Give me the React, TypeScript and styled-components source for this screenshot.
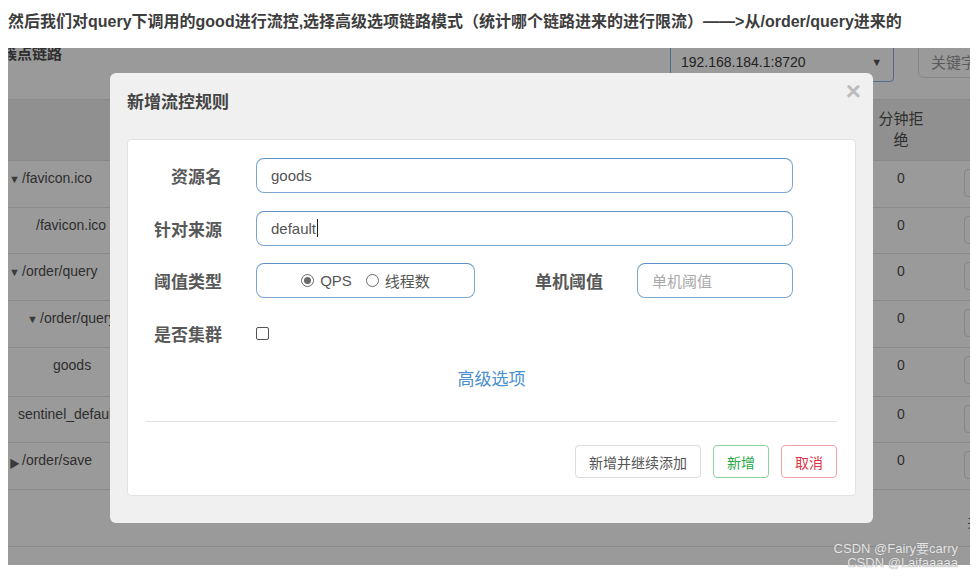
import styled, { createGlobalStyle } from 'styled-components';

const GlobalStyle = createGlobalStyle`
  html, body {
    margin: 0;
    padding: 0;
    background: #fff;
  }
  body {
    font-family: "Liberation Sans", "Noto Sans CJK SC", sans-serif;
  }
  * {
    box-sizing: border-box;
  }
`;

type Caret = 'down' | 'right' | null;

const rows: { name: string; indent: number; caret: Caret; height: number }[] = [
  { name: '/favicon.ico', indent: 14, caret: 'down', height: 47 },
  { name: '/favicon.ico', indent: 28, caret: null, height: 46 },
  { name: '/order/query', indent: 14, caret: 'down', height: 47 },
  { name: '/order/query', indent: 32, caret: 'down', height: 47 },
  { name: 'goods', indent: 45, caret: null, height: 49 },
  { name: 'sentinel_default_context', indent: 10, caret: null, height: 46 },
  { name: '/order/save', indent: 14, caret: 'right', height: 47 },
];

export default function App() {
  return (
    <Page>
      <GlobalStyle />
      <Caption>
        然后我们对query下调用的good进行流控,选择高级选项链路模式（统计哪个链路进来的进行限流）——&gt;从/order/query进来的
      </Caption>

      <Shot>
        <Toolbar>
          <PanelTitle>簇点链路</PanelTitle>
          <MachineSelect>
            <span>192.168.184.1:8720</span>
            <SelectArrow>▼</SelectArrow>
          </MachineSelect>
          <SearchBox>关键字</SearchBox>
        </Toolbar>

        <Table>
          <HeadRow>
            <Cell />
            <Cell />
            <HeadCell>分钟拒绝</HeadCell>
            <Cell />
          </HeadRow>
          {rows.map((r, i) => (
            <BodyRow key={i} $height={r.height}>
              <TreeCell $indent={r.indent}>
                {r.caret && <CaretMark $indent={r.indent}>{r.caret === 'down' ? '▼' : '▶'}</CaretMark>}
                {r.name}
              </TreeCell>
              <Cell />
              <NumCell>0</NumCell>
              <ActionCell>
                <GhostButton />
              </ActionCell>
            </BodyRow>
          ))}
          <Pager>共 7 条记录</Pager>
        </Table>

        <Modal>
          <CloseMark>×</CloseMark>
          <ModalTitle>新增流控规则</ModalTitle>
          <Card>
            <FormRow>
              <Label>资源名</Label>
              <Field $width={537}>goods</Field>
            </FormRow>
            <FormRow>
              <Label>针对来源</Label>
              <Field $width={537}>
                default<TextCaret />
              </Field>
            </FormRow>
            <FormRow>
              <Label>阈值类型</Label>
              <RadioGroup>
                <RadioItem>
                  <Radio $checked />
                  QPS
                </RadioItem>
                <RadioItem>
                  <Radio />
                  线程数
                </RadioItem>
              </RadioGroup>
              <SideLabel>单机阈值</SideLabel>
              <Field $width={156} $placeholder>单机阈值</Field>
            </FormRow>
            <FormRow>
              <Label>是否集群</Label>
              <CheckBox />
            </FormRow>
            <AdvancedLink>高级选项</AdvancedLink>
            <Divider />
            <Footer>
              <Button $tone="default">新增并继续添加</Button>
              <Button $tone="success">新增</Button>
              <Button $tone="danger">取消</Button>
            </Footer>
          </Card>
        </Modal>
      </Shot>

      <Watermark>
        <span>CSDN @Fairy要carry</span>
        <span>CSDN @Laifaaaaa</span>
      </Watermark>
    </Page>
  );
}

const Page = styled.div`
  position: relative;
  width: 978px;
  height: 578px;
  overflow: hidden;
`;

const Caption = styled.div`
  height: 48px;
  padding: 0 0 8px 8px;
  display: flex;
  align-items: center;

  font-size: 16px;
  font-weight: 700;
  color: #3d3d3d;
  white-space: nowrap;
`;

const Shot = styled.div`
  position: relative;
  width: 962px;
  height: 517px;
  margin-left: 8px;
  overflow: hidden;

  background: #9a9a9a;
  color: #2e2e2e;
`;

const Toolbar = styled.div`
  display: flex;
  height: 52px;
  border-bottom: 1px solid #8a8a8a;
`;

const PanelTitle = styled.div`
  flex: 0 0 60px;
  margin: -6px 0 0 -6px;
  white-space: nowrap;

  font-size: 15px;
  font-weight: 700;
  color: #2e2e2e;
`;

const MachineSelect = styled.div`
  display: flex;
  flex: 0 0 224px;
  align-items: center;
  justify-content: space-between;

  height: 42px;
  margin: -8px 0 0 608px;
  padding: 2px 11px 0 10px;

  border: 1px solid #4f6d8e;
  border-radius: 0 0 4px 4px;

  font-size: 14px;
  color: #222;
`;

const SelectArrow = styled.span`
  font-size: 11px;
  color: #333;
`;

const SearchBox = styled.div`
  flex: 0 0 70px;
  height: 38px;
  margin: -8px 0 0 24px;
  padding: 10px 0 0 12px;
  white-space: nowrap;

  border: 1px solid #868686;
  border-radius: 6px;

  font-size: 15px;
  color: #5a5a5a;
`;

const Table = styled.div`
  display: flex;
  flex-direction: column;
`;

const HeadRow = styled.div`
  display: grid;
  grid-template-columns: 150px 1fr 60px 39px;
  height: 61px;

  background: #909090;
  border-bottom: 1px solid #888;
`;

const BodyRow = styled.div<{ $height: number }>`
  display: grid;
  grid-template-columns: 150px 1fr 60px 39px;
  height: ${({ $height }) => $height}px;

  border-bottom: 1px solid #8a8a8a;
`;

const Cell = styled.div``;

const HeadCell = styled.div`
  padding: 8px 4px 0;
  font-size: 15px;
  line-height: 21px;
  text-align: center;
  color: #2e2e2e;
`;

const TreeCell = styled.div<{ $indent: number }>`
  position: relative;
  padding: 9px 0 0 ${({ $indent }) => $indent}px;
  white-space: nowrap;
  font-size: 14px;
`;

const CaretMark = styled.span<{ $indent: number }>`
  position: absolute;
  top: 12px;
  left: ${({ $indent }) => $indent - 13}px;
  font-size: 11px;
  color: #3a3a3a;
`;

const NumCell = styled.div`
  padding-top: 9px;
  font-size: 14px;
  text-align: center;
`;

const ActionCell = styled.div`
  padding: 8px 0 0 33px;
`;

const GhostButton = styled.div`
  width: 40px;
  height: 28px;
  border: 1px solid #858585;
  border-radius: 4px;
`;

const Pager = styled.div`
  display: flex;
  justify-content: flex-end;
  height: 57px;
  padding-top: 20px;
  margin-right: -74px;
  white-space: nowrap;

  border-bottom: 1px solid #8a8a8a;

  font-size: 15px;
  color: #333;
`;

const Modal = styled.div`
  position: absolute;
  top: 25px;
  left: 102px;
  width: 763px;
  height: 450px;
  padding: 18px 17px 0;

  background: #f0f0f0;
  border-radius: 6px;
`;

const CloseMark = styled.div`
  position: absolute;
  top: 3px;
  right: 12px;

  font-size: 26px;
  font-weight: 700;
  color: #bcbcbc;
`;

const ModalTitle = styled.div`
  height: 24px;
  margin-bottom: 24px;

  font-size: 17px;
  font-weight: 700;
  line-height: 24px;
  color: #444;
`;

const Card = styled.div`
  display: flex;
  flex-direction: column;
  padding: 18px 18px 17px;

  background: #fff;
  border: 1px solid #e2e2e2;
  border-radius: 4px;
`;

const FormRow = styled.div`
  display: flex;
  align-items: center;
  height: 35px;
  margin-bottom: 17.6px;
`;

const Label = styled.div`
  width: 76px;
  margin-right: 34px;

  text-align: right;
  font-size: 17px;
  font-weight: 700;
  color: #585858;
  white-space: nowrap;
`;

const SideLabel = styled(Label)`
  width: 128px;
`;

const Field = styled.div<{ $width: number; $placeholder?: boolean }>`
  display: flex;
  align-items: center;
  width: ${({ $width }) => $width}px;
  height: 35px;
  padding: 0 14px;

  border: 1px solid #7ba6d4;
  border-top-color: #5f91c6;
  border-radius: 8px;

  font-size: 15px;
  color: ${({ $placeholder }) => ($placeholder ? '#a9a9a9' : '#555')};
`;

const TextCaret = styled.span`
  display: inline-block;
  width: 1px;
  height: 18px;
  margin-left: 1px;
  background: #222;
`;

const RadioGroup = styled.div`
  display: flex;
  align-items: center;
  justify-content: center;
  gap: 14px;
  width: 219px;
  height: 35px;

  border: 1px solid #7ba6d4;
  border-top-color: #5f91c6;
  border-radius: 8px;
`;

const RadioItem = styled.div`
  display: flex;
  align-items: center;
  gap: 6px;
  font-size: 15px;
  color: #555;
`;

const Radio = styled.span<{ $checked?: boolean }>`
  position: relative;
  width: 13px;
  height: 13px;
  border: 1px solid #6a6a6a;
  border-radius: 50%;

  &::after {
    content: '';
    display: ${({ $checked }) => ($checked ? 'block' : 'none')};
    position: absolute;
    top: 2px;
    left: 2px;
    width: 7px;
    height: 7px;
    border-radius: 50%;
    background: #6a6a6a;
  }
`;

const CheckBox = styled.span`
  width: 13px;
  height: 13px;
  border: 1px solid #555;
  border-radius: 2px;
`;

const AdvancedLink = styled.div`
  text-align: center;
  font-size: 17px;
  line-height: 24px;
  color: #4a8fd0;
`;

const Divider = styled.div`
  height: 1px;
  margin: 29px 0 23px;
  background: #e0e0e0;
`;

const Footer = styled.div`
  display: flex;
  justify-content: flex-end;
  gap: 12px;
`;

const tones = {
  default: { border: '#dcdcdc', color: '#555' },
  success: { border: '#8fd3a0', color: '#28a745' },
  danger: { border: '#f1a3ab', color: '#dc3545' },
};

const Button = styled.button<{ $tone: keyof typeof tones }>`
  height: 33px;
  padding: 0 13px;

  background: #fff;
  border: 1px solid ${({ $tone }) => tones[$tone].border};
  border-radius: 4px;

  font-family: inherit;
  font-size: 14px;
  color: ${({ $tone }) => tones[$tone].color};
`;

const Watermark = styled.div`
  position: absolute;
  right: 20px;
  bottom: 8px;
  display: flex;
  flex-direction: column;
  align-items: flex-end;

  font-size: 13px;
  line-height: 14px;
  color: #e6e6e6;
  text-shadow: 0 0 1px #777;
`;
